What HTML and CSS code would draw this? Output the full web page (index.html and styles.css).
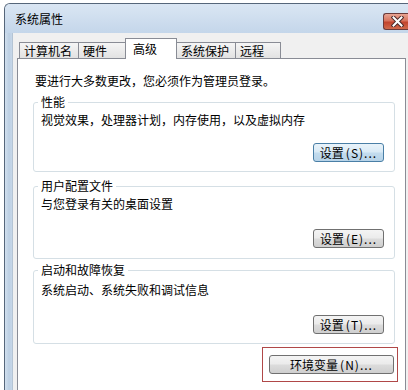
FILE: index.html
```html
<!DOCTYPE html>
<html lang="zh-CN">
<head>
<meta charset="utf-8">
<title>系统属性</title>
<link rel="stylesheet" href="styles.css">
</head>
<body>
<div class="window">
  <div class="titlebar">
    <span class="title">系统属性</span>
    <button class="close" aria-label="关闭">
      <svg width="13" height="11" viewBox="0 0 13 11">
        <path d="M2.5 1.5 L10.5 9.5 M10.5 1.5 L2.5 9.5" stroke="#4a2a2a" stroke-width="4" stroke-linecap="square"/>
        <path d="M2.5 1.5 L10.5 9.5 M10.5 1.5 L2.5 9.5" stroke="#ffffff" stroke-width="2" stroke-linecap="square"/>
      </svg>
    </button>
  </div>
  <div class="client">
    <div class="tabs">
      <div class="tab t1">计算机名</div>
      <div class="tab t2">硬件</div>
      <div class="tab t3 active">高级</div>
      <div class="tab t4">系统保护</div>
      <div class="tab t5">远程</div>
    </div>
    <div class="panel">
      <p class="intro">要进行大多数更改，您必须作为管理员登录。</p>
      <fieldset class="group g1">
        <legend>性能</legend>
        <p class="desc">视觉效果，处理器计划，内存使用，以及虚拟内存</p>
        <div class="actions"><button class="btn default">设置<span class="key">(S)...</span></button></div>
      </fieldset>
      <fieldset class="group g2">
        <legend>用户配置文件</legend>
        <p class="desc">与您登录有关的桌面设置</p>
        <div class="actions"><button class="btn">设置<span class="key">(E)...</span></button></div>
      </fieldset>
      <fieldset class="group g3">
        <legend>启动和故障恢复</legend>
        <p class="desc">系统启动、系统失败和调试信息</p>
        <div class="actions"><button class="btn">设置<span class="key">(T)...</span></button></div>
      </fieldset>
      <div class="env-row">
        <div class="highlight">
          <button class="btn wide">环境变量<span class="key">(N)...</span></button>
        </div>
      </div>
    </div>
  </div>
</div>
</body>
</html>
```

FILE: styles.css
```css
* { box-sizing: border-box; }
html, body { margin: 0; padding: 0; }
body {
  background: #fff;
  width: 408px;
  height: 390px;
  overflow: hidden;
  font: 12px/16px "Noto Sans CJK SC", "Noto Sans", sans-serif;
  color: #000;
}
.window {
  margin: 3px 0 0 4px;
  width: 404px;
  height: 387px;
  border-top: 1px solid #56667a;
  border-left: 1px solid #56667a;
  border-radius: 6px 0 0 0;
  background: linear-gradient(90deg, #d2e0ee 0, #bccfe3 4px, #c9d9ea 8px);
  padding: 0 0 0 7px;
}
.titlebar {
  margin: 0 0 0 -7px;
  height: 29px;
  display: flex;
  align-items: center;
  padding-left: 10px;
  background: linear-gradient(#dae6f3, #c4d6ea);
  border-radius: 5px 0 0 0;
}
.title { flex: 1; padding-top: 1px; }
.close {
  align-self: flex-start;
  margin-top: 9px;
  width: 25px;
  height: 17px;
  padding: 0 0 0 2px;
  border: 1px solid #6b3b3b;
  border-right: none;
  border-radius: 3px 0 0 3px;
  background: linear-gradient(#e8a493 0%, #d7735d 45%, #c2442e 55%, #d06a4c 100%);
  display: flex;
  align-items: center;
  justify-content: center;
}
.close svg { display: block; }
.client {
  height: 357px;
  background: #f0f0f0;
  border-left: 1px solid #b4c4d4;
  padding: 5px 0 0 4px;
  display: flex;
  flex-direction: column;
  align-items: flex-start;
}
.tabs {
  display: flex;
  align-items: flex-end;
  height: 20px;
  margin-left: 2px;
}
.tab {
  height: 16px;
  border: 1px solid #898c95;
  border-bottom: none;
  background: linear-gradient(#f5f5f5, #e2e2e2);
  padding-left: 4px;
  line-height: 15px;
  margin-left: -1px;
  white-space: nowrap;
}
.t1 { width: 60px; margin-left: 0; }
.t2 { width: 48px; }
.t3 { width: 52px; }
.t4 { width: 60px; }
.t5 { width: 46px; }
.tab.active {
  height: 21px;
  margin-bottom: -1px;
  position: relative;
  z-index: 1;
  background: #fff;
  padding: 1px 0 0 7px;
  line-height: 17px;
}
.panel {
  width: 389px;
  height: 332px;
  border: 1px solid #898c95;
  border-bottom: none;
  background: #fff;
  padding: 14px 10px 0 15px;
}
.intro { margin: 0 0 0 2px; }
.group {
  margin: 0;
  border: 1px solid #d5dfe5;
  border-radius: 3px;
  padding: 2px 10px 9px 7px;
  min-width: 0;
}
.group legend {
  padding: 0 3px;
  margin-left: -3px;
  line-height: 16px;
}
.g1 { margin-top: 5px; }
.g2 { margin-top: 6px; padding-bottom: 10px; }
.g3 { margin-top: 3px; padding-top: 4px; }
.g2 .actions, .g3 .actions { margin-top: 17px; }
.desc { margin: 0; }
.actions {
  display: flex;
  justify-content: flex-end;
  margin-top: 15px;
}
.btn {
  width: 71px;
  height: 19px;
  padding: 0;
  border: 1px solid #707070;
  border-radius: 3px;
  background: linear-gradient(#f4f4f4 0%, #ebebeb 48%, #dcdcdc 52%, #cfcfcf 100%);
  font: inherit;
  line-height: 17px;
  color: #000;
  white-space: nowrap;
}
.btn.default {
  border-color: #4a7fa6;
  background: linear-gradient(#e9f3fa 0%, #d9eaf6 48%, #c3dcee 52%, #b7d3e8 100%);
}
.btn.wide { width: 125px; }
.key { letter-spacing: 1px; margin-left: 2px; }
.env-row {
  display: flex;
  justify-content: flex-end;
  margin: 3px -3px 0 0;
}
.highlight {
  border: 1px solid #b04848;
  padding: 7px 3px 7px 6px;
}
```
